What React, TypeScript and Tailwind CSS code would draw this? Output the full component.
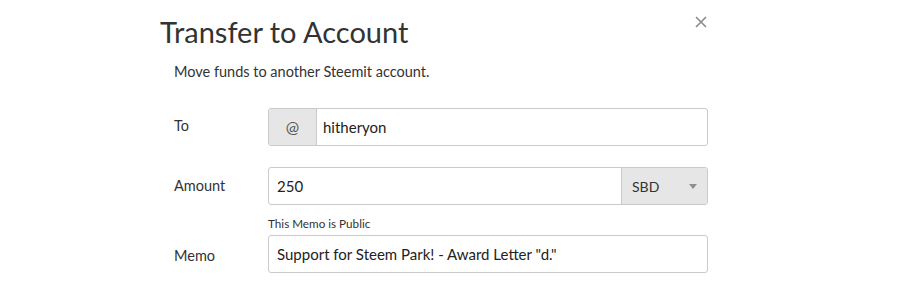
import React from "react";

export default function App() {
  const font = { fontFamily: "Lato, 'Open Sans', sans-serif" };
  return (
    <div className="relative w-[900px] h-[296px] bg-white text-[#333]" style={font}>
      <button className="absolute left-[694px] top-[15px] w-[13px] h-[13px] flex items-center justify-center">
        <svg width="12" height="12" viewBox="0 0 12 12">
          <path d="M1 1L11 11M11 1L1 11" stroke="#8a8a8a" strokeWidth="1.6" />
        </svg>
      </button>
      <div className="ml-[160px] w-[548px] flex flex-col">
        <h1 className="mt-[14px] text-[29px] leading-[36px] text-[#333]">Transfer to Account</h1>
        <p className="mt-[12px] pl-[14px] text-[14.5px] leading-[20px] text-[#333]">
          Move funds to another Steemit account.
        </p>

        <div className="mt-[26px] flex items-center">
          <label className="w-[108px] pl-[14px] text-[14.5px] -mt-[2px]">To</label>
          <div className="flex-1 flex h-[38px] border border-[#cacaca] rounded-[3px] overflow-hidden">
            <span className="w-[48px] flex items-center justify-center bg-[#e6e6e6] border-r border-[#cacaca] text-[16px] text-[#555]">
              @
            </span>
            <span className="flex-1 flex items-center pl-[6px] text-[15px] text-[#222]">hitheryon</span>
          </div>
        </div>

        <div className="mt-[21px] flex items-center">
          <label className="w-[108px] pl-[14px] text-[14.5px] -mt-[1px]">Amount</label>
          <div className="flex-1 flex h-[38px] border border-[#cacaca] rounded-[3px] overflow-hidden">
            <span className="flex-1 flex items-center pl-[8px] text-[15px] text-[#222]">250</span>
            <span className="w-[86px] flex items-center justify-between pl-[10px] pr-[10px] bg-[#e6e6e6] border-l border-[#cacaca] text-[14px] text-[#333]">
              SBD
              <svg width="8" height="5" viewBox="0 0 8 5">
                <path d="M0 0H8L4 5Z" fill="#8f8f8f" />
              </svg>
            </span>
          </div>
        </div>

        <div className="mt-[10px] pl-[108px] text-[11.7px] leading-[16px] text-[#333]">This Memo is Public</div>

        <div className="mt-[4px] flex items-center">
          <label className="w-[108px] pl-[14px] text-[14.5px] mt-[3px]">Memo</label>
          <div className="flex-1 flex h-[38px] border border-[#cacaca] rounded-[3px] overflow-hidden">
            <span className="flex-1 flex items-center pl-[8px] text-[15px] text-[#222]">
              Support for Steem Park! - Award Letter "d."
            </span>
          </div>
        </div>
      </div>
    </div>
  );
}
